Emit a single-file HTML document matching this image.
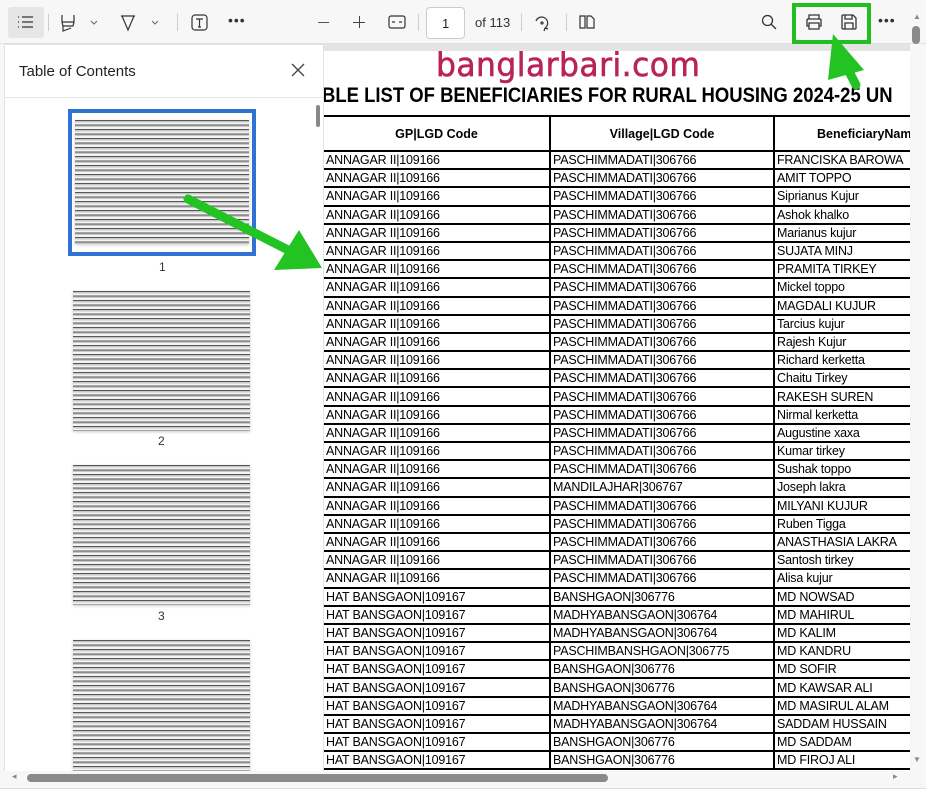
<!DOCTYPE html>
<html><head><meta charset="utf-8"><style>
*{margin:0;padding:0;box-sizing:border-box}
body{width:926px;height:789px;overflow:hidden;background:#f7f7f7;font-family:"Liberation Sans",sans-serif;position:relative}
.abs{position:absolute}
.tb{position:absolute;top:0;left:0;width:926px;height:44px;background:#f7f7f7;border-bottom:1px solid #e0e0e0}
.sep{position:absolute;top:14px;width:1px;height:17px;background:#ccc}
.doc{position:absolute;left:323px;top:51px;width:587px;height:720px;background:#fff;overflow:hidden}
.side{position:absolute;left:4px;top:44px;width:320px;height:727px;background:#fff;border:1px solid #e2e2e2;border-bottom:none}
table{border-collapse:collapse;table-layout:fixed;position:absolute;left:-1px;top:64px;width:642px;font-family:"Liberation Sans",sans-serif;font-size:12.5px;color:#000}
td{border:2px solid #000;height:18.2px;padding:0 0 0 2px;white-space:nowrap;overflow:hidden;line-height:14px;letter-spacing:-0.2px}
th{border:2px solid #000;height:35px;font-weight:bold;font-size:12.5px}
.thumb{position:absolute;background:#fff;box-shadow:0 1px 3px rgba(0,0,0,.2);
background-image:repeating-linear-gradient(to bottom,#555 0 1px,#c8c8c8 1px 2.5px,#f4f4f4 2.5px 4.5px);}
.lbl{position:absolute;font-size:12px;color:#333}
</style></head><body>
<div class="tb">
 <div class="abs" style="left:8px;top:7px;width:36px;height:31px;background:#e6e6e6;border-radius:3px"></div>
 <svg class="abs" style="left:17px;top:15px" width="18" height="14" viewBox="0 0 18 14" fill="none" stroke="#333" stroke-width="1.2"><path d="M1 2h1M5 2h11M1 7h1M5 7h11M1 12h1M5 12h11"/></svg>
 <div class="sep" style="left:48px"></div>
 <svg class="abs" style="left:60px;top:14px" width="16" height="18" viewBox="0 0 16 18" fill="none" stroke="#333" stroke-width="1.2"><path d="M2 1v7h12V1M2 8l1 4h10l1-4M3 12v5l8-3"/></svg>
 <svg class="abs" style="left:90px;top:20px" width="8" height="5"><path d="M1 1l3 3 3-3" stroke="#666" fill="none"/></svg>
 <svg class="abs" style="left:120px;top:14px" width="16" height="18" viewBox="0 0 16 18" fill="none" stroke="#333" stroke-width="1.2"><path d="M1 2h14M2 2l6 14 6-14"/></svg>
 <svg class="abs" style="left:151px;top:20px" width="8" height="5"><path d="M1 1l3 3 3-3" stroke="#666" fill="none"/></svg>
 <div class="sep" style="left:177px"></div>
 <svg class="abs" style="left:191px;top:14px" width="17" height="17" fill="none" stroke="#333" stroke-width="1.2"><rect x="1" y="1" width="15" height="15" rx="3"/><path d="M5 5h7M8.5 5v8M7 13h3"/></svg>
 <div class="abs" style="left:228px;top:12px;font-size:14px;color:#333;letter-spacing:1px">•••</div>
 <div class="abs" style="left:318px;top:22px;width:11px;height:1.3px;background:#555"></div>
 <div class="abs" style="left:353px;top:22px;width:12px;height:1.3px;background:#444"></div>
 <div class="abs" style="left:358.5px;top:16px;width:1.3px;height:12px;background:#444"></div>
 <svg class="abs" style="left:388px;top:15px" width="18" height="14" fill="none" stroke="#333" stroke-width="1.2"><rect x="1" y="1" width="16" height="12" rx="2"/><path d="M4 7h3M11 7h3"/></svg>
 <div class="sep" style="left:418px"></div>
 <div class="abs" style="left:426px;top:7px;width:39px;height:32px;border:1px solid #ccc;border-radius:4px;background:#fff;font-size:13px;color:#222;padding:8px 0 0 15px">1</div>
 <div class="abs" style="left:475px;top:15px;font-size:13px;color:#333">of 113</div>
 <div class="sep" style="left:521px"></div>
 <svg class="abs" style="left:533px;top:13px" width="18" height="19" fill="none" stroke="#333" stroke-width="1.2"><path d="M3 8a6 6 0 1 1 9 7M12 15l-1 3M12 15l3 1"/><circle cx="9" cy="10" r="1"/></svg>
 <div class="sep" style="left:566px"></div>
 <svg class="abs" style="left:578px;top:14px" width="18" height="16" fill="none" stroke="#333" stroke-width="1.2"><path d="M2 2h5v12H2zM9 2h4l3 3v9H9z"/></svg>
 <svg class="abs" style="left:761px;top:14px" width="16" height="16" fill="none" stroke="#333" stroke-width="1.3"><circle cx="6.5" cy="6.5" r="5"/><path d="M10 10l5 5"/></svg>
 <svg class="abs" style="left:805px;top:14px" width="18" height="16" fill="none" stroke="#333" stroke-width="1.3"><path d="M4 5V1h10v4M4 12H2V6a1 1 0 0 1 1-1h12a1 1 0 0 1 1 1v6h-2M4 9h10v6H4z"/></svg>
 <svg class="abs" style="left:841px;top:14px" width="16" height="16" fill="none" stroke="#333" stroke-width="1.3"><path d="M2 1h10l3 3v10a1 1 0 0 1-1 1H2a1 1 0 0 1-1-1V2a1 1 0 0 1 1-1zM4 1v4h7V1M4 15V9h8v6"/></svg>
 <div class="abs" style="left:792px;top:3px;width:79px;height:41px;border:4px solid #1fbf1f"></div>
 <div class="abs" style="left:878px;top:12px;font-size:14px;color:#333;letter-spacing:1px">•••</div>
</div>
<div class="abs" style="left:323px;top:44px;width:587px;height:7px;background:#e4e4e4"></div>
<div class="doc">
 <div class="abs" style="left:113px;top:-6px;font-size:33px;color:#b8245a;letter-spacing:0.5px;font-family:'DejaVu Sans',sans-serif;transform:scaleX(0.95);transform-origin:left;-webkit-text-stroke:0.6px #b8245a">banglarbari.com</div>
 <div class="abs" style="left:-1px;top:33px;font-size:21px;font-weight:bold;white-space:nowrap;transform:scaleX(0.88);transform-origin:left">BLE LIST OF BENEFICIARIES FOR RURAL HOUSING 2024-25 UN</div>
 <table>
 <colgroup><col style="width:227px"><col style="width:224px"><col style="width:191px"></colgroup>
 <tr><th>GP|LGD Code</th><th>Village|LGD Code</th><th style="text-align:left;padding-left:42px">BeneficiaryNam</th></tr>
 <tr><td>ANNAGAR II|109166</td><td>PASCHIMMADATI|306766</td><td>FRANCISKA BAROWA</td></tr>
 <tr><td>ANNAGAR II|109166</td><td>PASCHIMMADATI|306766</td><td>AMIT TOPPO</td></tr>
 <tr><td>ANNAGAR II|109166</td><td>PASCHIMMADATI|306766</td><td>Siprianus Kujur</td></tr>
 <tr><td>ANNAGAR II|109166</td><td>PASCHIMMADATI|306766</td><td>Ashok khalko</td></tr>
 <tr><td>ANNAGAR II|109166</td><td>PASCHIMMADATI|306766</td><td>Marianus kujur</td></tr>
 <tr><td>ANNAGAR II|109166</td><td>PASCHIMMADATI|306766</td><td>SUJATA MINJ</td></tr>
 <tr><td>ANNAGAR II|109166</td><td>PASCHIMMADATI|306766</td><td>PRAMITA TIRKEY</td></tr>
 <tr><td>ANNAGAR II|109166</td><td>PASCHIMMADATI|306766</td><td>Mickel toppo</td></tr>
 <tr><td>ANNAGAR II|109166</td><td>PASCHIMMADATI|306766</td><td>MAGDALI KUJUR</td></tr>
 <tr><td>ANNAGAR II|109166</td><td>PASCHIMMADATI|306766</td><td>Tarcius kujur</td></tr>
 <tr><td>ANNAGAR II|109166</td><td>PASCHIMMADATI|306766</td><td>Rajesh Kujur</td></tr>
 <tr><td>ANNAGAR II|109166</td><td>PASCHIMMADATI|306766</td><td>Richard kerketta</td></tr>
 <tr><td>ANNAGAR II|109166</td><td>PASCHIMMADATI|306766</td><td>Chaitu Tirkey</td></tr>
 <tr><td>ANNAGAR II|109166</td><td>PASCHIMMADATI|306766</td><td>RAKESH SUREN</td></tr>
 <tr><td>ANNAGAR II|109166</td><td>PASCHIMMADATI|306766</td><td>Nirmal kerketta</td></tr>
 <tr><td>ANNAGAR II|109166</td><td>PASCHIMMADATI|306766</td><td>Augustine xaxa</td></tr>
 <tr><td>ANNAGAR II|109166</td><td>PASCHIMMADATI|306766</td><td>Kumar tirkey</td></tr>
 <tr><td>ANNAGAR II|109166</td><td>PASCHIMMADATI|306766</td><td>Sushak toppo</td></tr>
 <tr><td>ANNAGAR II|109166</td><td>MANDILAJHAR|306767</td><td>Joseph lakra</td></tr>
 <tr><td>ANNAGAR II|109166</td><td>PASCHIMMADATI|306766</td><td>MILYANI KUJUR</td></tr>
 <tr><td>ANNAGAR II|109166</td><td>PASCHIMMADATI|306766</td><td>Ruben Tigga</td></tr>
 <tr><td>ANNAGAR II|109166</td><td>PASCHIMMADATI|306766</td><td>ANASTHASIA LAKRA</td></tr>
 <tr><td>ANNAGAR II|109166</td><td>PASCHIMMADATI|306766</td><td>Santosh tirkey</td></tr>
 <tr><td>ANNAGAR II|109166</td><td>PASCHIMMADATI|306766</td><td>Alisa kujur</td></tr>
 <tr><td>HAT BANSGAON|109167</td><td>BANSHGAON|306776</td><td>MD NOWSAD</td></tr>
 <tr><td>HAT BANSGAON|109167</td><td>MADHYABANSGAON|306764</td><td>MD MAHIRUL</td></tr>
 <tr><td>HAT BANSGAON|109167</td><td>MADHYABANSGAON|306764</td><td>MD KALIM</td></tr>
 <tr><td>HAT BANSGAON|109167</td><td>PASCHIMBANSHGAON|306775</td><td>MD KANDRU</td></tr>
 <tr><td>HAT BANSGAON|109167</td><td>BANSHGAON|306776</td><td>MD SOFIR</td></tr>
 <tr><td>HAT BANSGAON|109167</td><td>BANSHGAON|306776</td><td>MD KAWSAR ALI</td></tr>
 <tr><td>HAT BANSGAON|109167</td><td>MADHYABANSGAON|306764</td><td>MD MASIRUL ALAM</td></tr>
 <tr><td>HAT BANSGAON|109167</td><td>MADHYABANSGAON|306764</td><td>SADDAM HUSSAIN</td></tr>
 <tr><td>HAT BANSGAON|109167</td><td>BANSHGAON|306776</td><td>MD SADDAM</td></tr>
 <tr><td>HAT BANSGAON|109167</td><td>BANSHGAON|306776</td><td>MD FIROJ ALI</td></tr>
 </table>
</div>
<div class="abs" style="left:910px;top:44px;width:16px;height:745px;background:#f7f7f7"></div>
<div class="abs" style="left:912px;top:26px;width:8px;height:18px;background:#8a8a8a;border-radius:4px"></div>
<div class="abs" style="left:913px;top:12px;font-size:8px;color:#888">▲</div>
<div class="abs" style="left:913px;top:755px;font-size:8px;color:#888">▼</div>
<div class="side">
 <div class="abs" style="left:14px;top:18px;font-size:15px;color:#222">Table of Contents</div>
 <svg class="abs" style="left:286px;top:18px" width="14" height="14" stroke="#444" stroke-width="1.3"><path d="M1 1l12 12M13 1L1 13"/></svg>
 <div class="abs" style="left:0;top:52px;width:318px;height:1px;background:#e5e5e5"></div>
 <div class="abs" style="left:311px;top:60px;width:4px;height:22px;background:#888;border-radius:2px"></div>
</div>
<div class="abs" style="left:68px;top:109px;width:188px;height:147px;border:4px solid #2f72d6;background:#fff"></div>
<div class="thumb" style="left:75px;top:120px;width:174px;height:124px"></div>
<div class="lbl" style="left:159px;top:260px">1</div>
<div class="thumb" style="left:73px;top:291px;width:177px;height:140px"></div>
<div class="lbl" style="left:158px;top:434px">2</div>
<div class="thumb" style="left:73px;top:465px;width:177px;height:140px"></div>
<div class="lbl" style="left:158px;top:609px">3</div>
<div class="thumb" style="left:73px;top:640px;width:177px;height:131px"></div>
<div class="abs" style="left:0;top:771px;width:926px;height:18px;background:#f7f7f7;border-bottom:1px solid #ddd"></div>
<div class="abs" style="left:27px;top:774px;width:581px;height:8px;background:#8a8a8a;border-radius:4px"></div>
<div class="abs" style="left:12px;top:771px;font-size:9px;color:#888">◂</div>
<div class="abs" style="left:893px;top:771px;font-size:9px;color:#888">▸</div>
<svg class="abs" style="left:0;top:0" width="926" height="789">
 <path d="M188 199 L292 252" stroke="#22c322" stroke-width="9" stroke-linecap="round"/>
 <polygon points="322,268 274,270 299,230" fill="#22c322"/>
 <path d="M856 85 L843 60" stroke="#22c322" stroke-width="9" stroke-linecap="round"/>
 <polygon points="833,34 828,80 864,70" fill="#22c322"/>
</svg>
</body></html>
